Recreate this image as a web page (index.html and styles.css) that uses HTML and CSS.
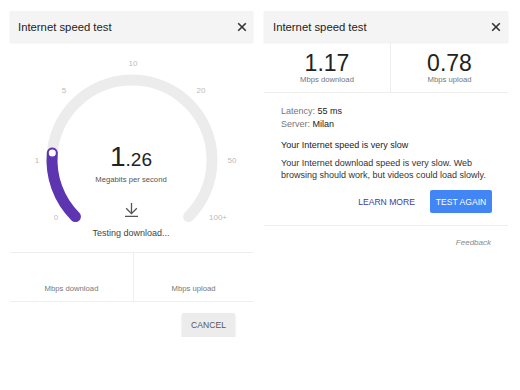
FILE: index.html
```html
<!DOCTYPE html>
<html lang="en">
<head>
  <meta charset="UTF-8">
  <meta name="viewport" content="width=device-width, initial-scale=1.0">
  <title>Internet speed test</title>
  <link rel="stylesheet" href="styles.css">
</head>
<body>
  <div class="screens">
    <!-- running test -->
    <div class="panel panel-left">
      <div class="header">
        <span class="title">Internet speed test</span>
        <svg class="close" width="10" height="10" viewBox="0 0 10 10"><path d="M1.2 1.2 L8.8 8.8 M8.8 1.2 L1.2 8.8"/></svg>
      </div>

      <div class="gauge">
        <svg class="gauge-dial" width="243" height="210" viewBox="0 0 243 210">
          <path class="track" d="M65.43 174.57 A80 80 0 1 1 178.57 174.57"/>
          <path class="fill" d="M65.43 174.57 A80 80 0 0 1 42.3 111"/>
          <circle class="knob" cx="42.3" cy="111" r="4.3"/>
          <text x="123" y="21">10</text>
          <text x="54" y="48">5</text>
          <text x="191" y="48">20</text>
          <text x="27" y="118">1</text>
          <text x="222" y="118">50</text>
          <text x="46" y="175">0</text>
          <text x="208" y="175">100+</text>
        </svg>
        <div class="reading">
          <div class="value"><span class="whole">1</span><span class="frac">.26</span></div>
          <div class="unit">Megabits per second</div>
          <svg class="download-icon" width="15" height="14" viewBox="0 0 15 14"><path d="M7.5 0 V10.5 M2.2 5.3 L7.5 10.6 L12.8 5.3 M1 13.3 H14"/></svg>
          <div class="status">Testing download...</div>
        </div>
      </div>

      <div class="stats stats-left">
        <div class="stat"><div class="stat-label">Mbps download</div></div>
        <div class="stat"><div class="stat-label">Mbps upload</div></div>
      </div>

      <div class="actions">
        <button class="btn btn-grey">CANCEL</button>
      </div>
    </div>

    <!-- result -->
    <div class="panel panel-right">
      <div class="header">
        <span class="title">Internet speed test</span>
        <svg class="close" width="10" height="10" viewBox="0 0 10 10"><path d="M1.2 1.2 L8.8 8.8 M8.8 1.2 L1.2 8.8"/></svg>
      </div>

      <div class="stats stats-right">
        <div class="stat">
          <div class="stat-num">1.17</div>
          <div class="stat-label">Mbps download</div>
        </div>
        <div class="stat">
          <div class="stat-num">0.78</div>
          <div class="stat-label">Mbps upload</div>
        </div>
      </div>

      <div class="info">
        <div class="meta">
          <div><span class="meta-key">Latency:</span> <span class="meta-val">55 ms</span></div>
          <div><span class="meta-key">Server:</span> <span class="meta-val">Milan</span></div>
        </div>
        <p class="verdict">Your Internet speed is very slow</p>
        <p class="desc">Your Internet download speed is very slow. Web browsing should work, but videos could load slowly.</p>
        <div class="result-actions">
          <a class="link">LEARN MORE</a>
          <button class="btn btn-blue">TEST AGAIN</button>
        </div>
      </div>

      <div class="feedback">Feedback</div>
    </div>
  </div>
</body>
</html>
```

FILE: styles.css
```css
body {
  margin: 0;
  padding: 11px 0 0 10px;
  background-color: white;
  font-family: 'Liberation Sans', Arial, sans-serif;
  color: #222;
}
.screens {
  display: flex;
  align-items: flex-start;
  gap: 11px;
}
.panel {
  background-color: white;
}
.panel-left {
  width: 243px;
}
.panel-right {
  width: 244px;
}
.header {
  height: 31px;
  display: flex;
  align-items: center;
  justify-content: space-between;
  padding: 0 6px 0 8px;
  background-color: #f4f4f4;
  box-shadow: 0 1px 2px rgba(0, 0, 0, 0.08);
}
.panel-right .header {
  padding: 0 7px 0 9px;
}
.title {
  font-size: 11.3px;
  color: #222;
}
.close path {
  stroke: #333;
  stroke-width: 1.6;
  fill: none;
}

/* gauge */
.gauge {
  position: relative;
  height: 210px;
}
.gauge-dial {
  position: absolute;
  top: 0;
  left: 0;
}
.track, .fill {
  fill: none;
  stroke-width: 11;
  stroke-linecap: round;
}
.track {
  stroke: #ececec;
}
.fill {
  stroke: #5e35b1;
}
.knob {
  fill: white;
  stroke: #5e35b1;
  stroke-width: 1.5;
}
.gauge-dial text {
  font-size: 8px;
  fill: #bbb;
  text-anchor: middle;
  dominant-baseline: central;
}
.reading {
  position: relative;
  display: flex;
  flex-direction: column;
  align-items: center;
  padding-top: 101px;
  margin-left: -1px;
}
.value {
  font-size: 28px;
  line-height: 28px;
  color: #222;
}
.frac {
  font-size: 19px;
  line-height: 1;
}
.unit {
  margin-top: 4px;
  font-size: 7.7px;
  line-height: 10px;
  color: #555;
}
.download-icon {
  margin-top: 18px;
}
.download-icon path {
  stroke: #555;
  stroke-width: 1.3;
  fill: none;
}
.status {
  margin-top: 10px;
  font-size: 9px;
  line-height: 12px;
  color: #444;
}

/* stats rows */
.stats {
  display: grid;
  border-top: 1px solid #eee;
  border-bottom: 1px solid #eee;
}
.stats-left {
  grid-template-columns: 123px 1fr;
  height: 48px;
}
.stats-right {
  grid-template-columns: 126px 1fr;
  border-top: none;
}
.stat {
  display: flex;
  flex-direction: column;
  align-items: center;
}
.stat + .stat {
  border-left: 1px solid #eee;
}
.stats-left .stat {
  justify-content: flex-end;
  padding-bottom: 7px;
}
.stats-right .stat {
  padding: 10px 0 8px;
}
.stat-num {
  font-size: 23px;
  line-height: 23px;
  color: #222;
}
.stat-label {
  font-size: 7.7px;
  line-height: 10px;
  color: #777;
}
.stats-right .stat-label {
  line-height: 9px;
}

/* buttons */
.btn {
  border: none;
  border-radius: 2px;
  padding: 0;
  font-family: inherit;
  font-size: 8.6px;
  white-space: nowrap;
  cursor: pointer;
}
.btn-grey {
  width: 53px;
  height: 24px;
  background-color: #ececec;
  color: #555;
  box-shadow: 0 1px 2px rgba(0, 0, 0, 0.15);
}
.btn-blue {
  width: 62px;
  height: 23px;
  background-color: #4285f4;
  color: white;
}
.actions {
  display: flex;
  justify-content: flex-end;
  padding: 11px 18px 0 0;
}

/* result info */
.info {
  padding: 12px 16px 12px 17px;
  border-bottom: 1px solid #eee;
  font-size: 9px;
}
.meta {
  line-height: 13px;
}
.meta-key {
  color: #777;
}
.meta-val {
  color: #222;
}
.verdict {
  margin: 8px 0 0;
  line-height: 12px;
  color: #222;
}
.desc {
  margin: 6px 0 0;
  line-height: 12px;
  color: #333;
}
.result-actions {
  display: flex;
  justify-content: flex-end;
  align-items: center;
  gap: 15px;
  margin-top: 9px;
}
.link {
  font-size: 8.6px;
  color: #3d3d9e;
  cursor: pointer;
}
.feedback {
  padding: 12px 17px 0 0;
  text-align: right;
  font-size: 8px;
  font-style: italic;
  color: #888;
}
```
